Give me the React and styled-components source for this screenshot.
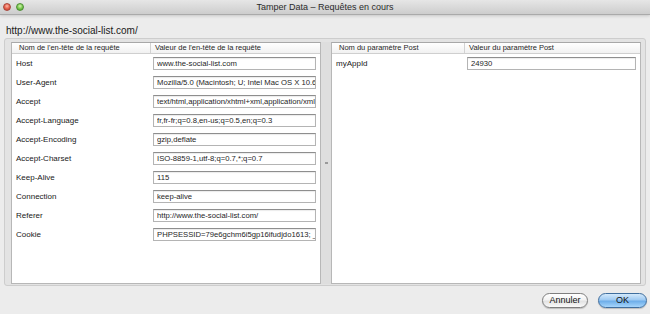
import React from 'react';
import styled, { createGlobalStyle } from 'styled-components';

const GlobalStyle = createGlobalStyle`
  html, body {
    margin: 0;
    padding: 0;
    background: #ececec;
  }
  body {
    width: 650px;
    height: 314px;
    overflow: hidden;
    font-family: "Liberation Sans", Arial, sans-serif;
    color: #1e1e1e;
  }
`;

const headers = [
  ['Host', 'www.the-social-list.com'],
  ['User-Agent', 'Mozilla/5.0 (Macintosh; U; Intel Mac OS X 10.6; fr; rv:1.9.2.3)'],
  ['Accept', 'text/html,application/xhtml+xml,application/xml;q=0.9,*/*;q=0.8'],
  ['Accept-Language', 'fr,fr-fr;q=0.8,en-us;q=0.5,en;q=0.3'],
  ['Accept-Encoding', 'gzip,deflate'],
  ['Accept-Charset', 'ISO-8859-1,utf-8;q=0.7,*;q=0.7'],
  ['Keep-Alive', '115'],
  ['Connection', 'keep-alive'],
  ['Referer', 'http://www.the-social-list.com/'],
  ['Cookie', 'PHPSESSID=79e6gchm6i5gp16ifudjdo1613; __utma=1.2'],
];

const postParams = [['myAppId', '24930']];

function App() {
  return (
    <Window>
      <GlobalStyle />
      <TitleBar>
        <Lights>
          <Light color="red" />
          <Light color="green" />
        </Lights>
        <Title>Tamper Data – Requêtes en cours</Title>
        <span />
      </TitleBar>
      <Url>http://www.the-social-list.com/</Url>
      <GroupBox>
        <Panel>
          <HeaderRow first={138}>
            <HeadCell>Nom de l'en-tête de la requête</HeadCell>
            <HeadCell divider>Valeur de l'en-tête de la requête</HeadCell>
          </HeaderRow>
          {headers.map(([name, value]) => (
            <Row key={name} first={138}>
              <Label>{name}</Label>
              <Field readOnly value={value} />
            </Row>
          ))}
        </Panel>
        <Splitter>
          <Grip />
        </Splitter>
        <Panel>
          <HeaderRow first={132}>
            <HeadCell>Nom du paramètre Post</HeadCell>
            <HeadCell divider>Valeur du paramètre Post</HeadCell>
          </HeaderRow>
          {postParams.map(([name, value]) => (
            <Row key={name} first={132}>
              <Label>{name}</Label>
              <Field readOnly value={value} />
            </Row>
          ))}
        </Panel>
      </GroupBox>
      <Footer>
        <Button>Annuler</Button>
        <Button primary>OK</Button>
      </Footer>
    </Window>
  );
}

export default App;

const Window = styled.div`
  display: flex;
  flex-direction: column;
  width: 650px;
  height: 314px;
  background: #ececec;
`;

const TitleBar = styled.div`
  display: grid;
  grid-template-columns: 1fr auto 1fr;
  align-items: center;
  height: 14px;
  background: linear-gradient(#e6e6e6, #cdcdcd);
  border-bottom: 1px solid #aaaaaa;
  box-shadow: 0 1px 3px rgba(0, 0, 0, 0.16);
`;

const Lights = styled.div`
  display: flex;
  gap: 5px;
  padding-left: 3px;
`;

const Light = styled.span`
  width: 8px;
  height: 8px;
  border-radius: 50%;
  box-sizing: border-box;
  border: 1px solid ${(p) => (p.color === 'red' ? '#a8453a' : '#4d8d36')};
  background: ${(p) =>
    p.color === 'red'
      ? 'radial-gradient(circle at 50% 35%, #fbb9a8 0%, #e8634f 50%, #b93224 100%)'
      : 'radial-gradient(circle at 50% 35%, #d4f5b0 0%, #7dcb52 50%, #3e9520 100%)'};
`;

const Title = styled.div`
  font-size: 9px;
  color: #2b2b2b;
  line-height: 14px;
`;

const Url = styled.div`
  font-size: 10px;
  line-height: 12px;
  padding: 10px 0 0 6px;
  height: 13px;
  color: #1a1a1a;
`;

const GroupBox = styled.div`
  display: flex;
  box-sizing: border-box;
  width: 642px;
  height: 248px;
  margin: 0 4px;
  padding: 3px 4px 1px 6px;
  background: #e3e3e3;
  border: 1px solid #cdcdcd;
  border-radius: 3px;
`;

const Panel = styled.div`
  display: flex;
  flex-direction: column;
  width: 310px;
  box-sizing: border-box;
  background: #fff;
  border: 1px solid #b7b7b7;
  border-top-color: #a8a8a8;
`;

const HeaderRow = styled.div`
  display: grid;
  grid-template-columns: ${(p) => p.first}px 1fr;
  height: 10px;
  background: linear-gradient(#ffffff, #f1f1f1);
  border-bottom: 1px solid #cfcfcf;
`;

const HeadCell = styled.div`
  font-size: 7.5px;
  line-height: 10px;
  padding-left: ${(p) => (p.divider ? 4 : 7)}px;
  border-left: ${(p) => (p.divider ? '1px solid #d2d2d2' : 'none')};
  white-space: nowrap;
  overflow: hidden;
  color: #262626;
`;

const Row = styled.div`
  display: grid;
  grid-template-columns: ${(p) => p.first + 1}px 1fr;
  align-items: center;
  height: 19px;
`;

const Label = styled.div`
  font-size: 8px;
  padding-left: 4px;
  color: #202020;
  white-space: nowrap;
`;

const Field = styled.input`
  box-sizing: border-box;
  height: 13px;
  margin: 0 4px 0 2px;
  width: calc(100% - 6px);
  padding: 0 0 0 3px;
  font-family: "Liberation Sans", Arial, sans-serif;
  font-size: 7.7px;
  color: #1e1e1e;
  background: #fff;
  border: 1px solid #b4b4b4;
  border-top-color: #8e8e8e;
  box-shadow: inset 0 1px 1px rgba(0, 0, 0, 0.08);
  outline: none;
`;

const Splitter = styled.div`
  display: flex;
  align-items: center;
  justify-content: center;
  width: 10px;
  background: #dedede;
`;

const Grip = styled.span`
  width: 3px;
  height: 2px;
  background: #9a9a9a;
`;

const Footer = styled.div`
  display: flex;
  justify-content: flex-end;
  gap: 10px;
  padding: 7px 3px 0 0;
`;

const Button = styled.button`
  box-sizing: border-box;
  width: ${(p) => (p.primary ? 49 : 46)}px;
  height: 15px;
  padding: 0;
  border-radius: 8px;
  font-family: "Liberation Sans", Arial, sans-serif;
  font-size: 9px;
  line-height: 13px;
  color: #111;
  border: 1px solid ${(p) => (p.primary ? '#3f6e9e' : '#7e7e7e')};
  background: ${(p) =>
    p.primary
      ? 'linear-gradient(#d3e9fb 0%, #9fcaf2 45%, #6eaee9 55%, #a6d5fb 100%)'
      : 'linear-gradient(#ffffff 0%, #f3f3f3 45%, #e2e2e2 55%, #fafafa 100%)'};
  box-shadow: 0 1px 1px rgba(0, 0, 0, 0.2);
`;
